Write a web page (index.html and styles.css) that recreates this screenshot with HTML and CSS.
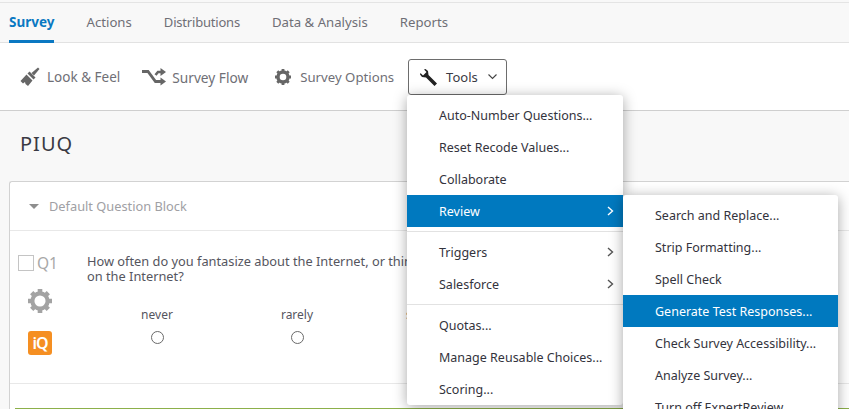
FILE: index.html
```html
<!DOCTYPE html>
<html>
<head>
    <title>PIUQ - Survey</title>
    <meta name="viewport" content="width=device-width, initial-scale=1.0">
    <link rel="stylesheet" href="styles.css">
</head>
<body>
    <div class="page">
        <nav class="tabs">
            <a class="tab tab-active">Survey</a>
            <a class="tab">Actions</a>
            <a class="tab tab-narrow">Distributions</a>
            <a class="tab">Data &amp; Analysis</a>
            <a class="tab">Reports</a>
        </nav>

        <div class="toolbar">
            <a class="tool tool-look">
                <svg class="tool-icon" width="20" height="20" viewBox="0 0 20 20"><path d="M11.500 6L18 0.500L19.500 2L14 8.500Z" fill="#666"/><path d="M9.500 4.500L15.500 10.500L13.500 12.500L7.500 6.500Z" fill="#666"/><path d="M6.500 7.500L12.500 13.500L8 19L5.500 17L5 15L3 16.500L0.500 14Z" fill="#666"/></svg>
                Look &amp; Feel
            </a>
            <a class="tool tool-flow">
                <svg class="tool-icon" width="24" height="18" viewBox="0 0 24 18"><path d="M0 3.500H6L13.500 13.500H19" fill="none" stroke="#666" stroke-width="2.800"/><path d="M13.500 7L16 4H19" fill="none" stroke="#666" stroke-width="2.600"/><path d="M18.500 0L24 4L18.500 8ZM18.500 9.500L24 13.500L18.500 17.500Z" fill="#666"/></svg>
                Survey Flow
            </a>
            <a class="tool tool-options">
                <svg class="tool-icon" width="18" height="18" viewBox="0 0 18 18"><circle cx="9" cy="9" r="5" fill="none" stroke="#666" stroke-width="3.400"/><path d="M9 1V17M1 9H17M3.300 3.300L14.700 14.700M14.700 3.300L3.300 14.700" stroke="#666" stroke-width="2.800"/><circle cx="9" cy="9" r="3.300" fill="#fff"/></svg>
                Survey Options
            </a>
            <button class="tools-btn">
                <svg width="17" height="17" viewBox="0 0 17 17"><path d="M5.500 0L8 2L8.500 6L17 14.500L14.500 17L6 8.500L2 8L0 5.500L0.500 4L3 6.500L6.500 3L4 0.500Z" fill="#222"/></svg>
                <span class="tools-label">Tools</span>
                <svg width="9" height="6" viewBox="0 0 9 6"><path d="M0.500 0.500L4.500 4.500L8.500 0.500" fill="none" stroke="#444" stroke-width="1.100"/></svg>
            </button>
        </div>

        <h1 class="survey-title">PIUQ</h1>

        <div class="block">
            <div class="block-header">
                <span class="caret"></span>
                <span class="block-name">Default Question Block</span>
            </div>
            <div class="question">
                <div class="q-side">
                    <div class="q-id"><span class="q-check"></span>Q1</div>
                    <svg class="q-gear" width="24" height="24" viewBox="0 0 26 26"><circle cx="13" cy="13" r="8" fill="none" stroke="#a3a3a3" stroke-width="5"/><path d="M13 0V26M0 13H26M4 4L22 22M22 4L4 22" stroke="#a3a3a3" stroke-width="5"/><circle cx="13" cy="13" r="6" fill="#fff"/></svg>
                    <div class="iq-badge">iQ</div>
                </div>
                <div class="q-body">
                    <p class="q-text">How often do you fantasize about the Internet, or think about what it would be like to be on the Internet?</p>
                    <div class="choices">
                        <div class="choice">never<span class="radio"></span></div>
                        <div class="choice">rarely<span class="radio"></span></div>
                        <div class="choice">sometimes<span class="radio"></span></div>
                    </div>
                </div>
            </div>
            <div class="block-footer"></div>
        </div>

        <div class="menu menu-tools">
            <a class="menu-item">Auto-Number Questions...</a>
            <a class="menu-item">Reset Recode Values...</a>
            <a class="menu-item">Collaborate</a>
            <a class="menu-item menu-item-on">Review<svg class="chev" width="7" height="10" viewBox="0 0 7 10"><path d="M1 1L5.500 5L1 9" fill="none" stroke="#fff" stroke-width="1.400"/></svg></a>
            <div class="menu-sep"></div>
            <a class="menu-item">Triggers<svg class="chev" width="7" height="10" viewBox="0 0 7 10"><path d="M1 1L5.500 5L1 9" fill="none" stroke="#555" stroke-width="1.400"/></svg></a>
            <a class="menu-item">Salesforce<svg class="chev" width="7" height="10" viewBox="0 0 7 10"><path d="M1 1L5.500 5L1 9" fill="none" stroke="#555" stroke-width="1.400"/></svg></a>
            <div class="menu-sep"></div>
            <a class="menu-item">Quotas...</a>
            <a class="menu-item">Manage Reusable Choices...</a>
            <a class="menu-item">Scoring...</a>
        </div>

        <div class="menu menu-review">
            <a class="menu-item">Search and Replace...</a>
            <a class="menu-item">Strip Formatting...</a>
            <a class="menu-item">Spell Check</a>
            <a class="menu-item menu-item-on">Generate Test Responses...</a>
            <a class="menu-item">Check Survey Accessibility...</a>
            <a class="menu-item">Analyze Survey...</a>
            <a class="menu-item">Turn off ExpertReview</a>
        </div>
    </div>
</body>
</html>
```

FILE: styles.css
```css
* {
    box-sizing: border-box;
}

html, body {
    margin: 0;
    height: 100%;
    overflow: hidden;
}

body {
    font-family: "Noto Sans", sans-serif;
    font-size: 13px;
    color: #3a3a44;
}

.page {
    position: relative;
    height: 409px;
    overflow: hidden;
    background-color: #f8f8f8;
    padding-top: 2px;
}

.tabs {
    display: flex;
    gap: 32px;
    height: 41px;
    padding-left: 9px;
    background-color: #f8f8f8;
    border-top: 1px solid #e4e4e4;
    border-bottom: 1px solid #e2e2e2;
}

.tab {
    height: 40px;
    font-size: 13.200px;
    line-height: 38px;
    color: #6f6f76;
}

.tab-narrow {
    font-size: 13px;
    letter-spacing: -0.200px;
}

.tab-active {
    color: #0a78c2;
    font-size: 13.500px;
    font-weight: 700;
    border-bottom: 3px solid #0a78c2;
}

.toolbar {
    display: flex;
    align-items: center;
    height: 68px;
    padding: 1px 0 0 20px;
    font-size: 13.500px;
    background-color: #fff;
    border-bottom: 1px solid #cfcfcf;
}

.tool {
    display: flex;
    align-items: center;
    color: #6f6f76;
}

.tool-icon {
    margin-right: 7px;
}

.tool-look {
    margin-right: 22px;
}

.tool-flow {
    margin-right: 26px;
    font-size: 13.700px;
}

.tool-flow .tool-icon {
    margin-right: 6px;
}

.tool-options {
    margin-right: 14px;
    font-size: 13.200px;
}

.tool-options .tool-icon {
    margin-right: 8px;
}

.tools-btn {
    display: flex;
    align-items: center;
    width: 99px;
    height: 36px;
    padding: 0 0 0 11px;
    font-family: inherit;
    font-size: 13px;
    color: #3a3a44;
    background-color: #fff;
    border: 1px solid #6d6d6d;
    border-radius: 3px;
}

.tools-label {
    margin: 0 10px 0 9px;
}

.survey-title {
    margin: 0;
    padding: 19px 0 0 20px;
    height: 70px;
    font-size: 20px;
    font-weight: 400;
    letter-spacing: 1px;
    line-height: 27px;
    color: #3a3a44;
}

.block {
    margin-left: 9px;
    background-color: #fff;
    border: 1px solid #d2d2d2;
    border-right: none;
    border-radius: 3px 0 0 0;
    height: 240px;
}

.block-header {
    display: flex;
    align-items: center;
    height: 49px;
    padding-left: 19px;
    border-bottom: 1px solid #e8e8e8;
}

.caret {
    width: 0;
    height: 0;
    margin-right: 10px;
    border-left: 5px solid transparent;
    border-right: 5px solid transparent;
    border-top: 5px solid #8e8e8e;
}

.block-name {
    font-size: 12.800px;
    color: #a0a0a4;
}

.question {
    display: flex;
    height: 153px;
    border-bottom: 1px solid #e8e8e8;
}

.q-side {
    display: flex;
    flex-direction: column;
    align-items: center;
    flex: none;
    width: 62px;
    padding: 23px 2px 0 0;
}

.q-id {
    display: flex;
    align-items: center;
    align-self: flex-start;
    margin-left: 8px;
    height: 18px;
    font-size: 15.500px;
    color: #a8a8a8;
}

.q-check {
    width: 16px;
    height: 16px;
    margin-right: 3px;
    border: 1px solid #c4c4c4;
}

.q-gear {
    margin-top: 17px;
}

.iq-badge {
    width: 24px;
    height: 24px;
    margin-top: 18px;
    font-size: 16px;
    font-weight: 600;
    line-height: 24px;
    text-align: center;
    letter-spacing: -1px;
    color: #fff;
    background-color: #f58f22;
    border-radius: 3px;
}

.q-body {
    flex: none;
    width: 345px;
    padding: 23px 0 0 15px;
    white-space: nowrap;
}

.q-text {
    margin: 0;
    font-size: 12.800px;
    line-height: 15px;
    white-space: normal;
    width: 545px;
    color: #55555e;
}

.choices {
    display: flex;
    margin-top: 23px;
}

.choice {
    display: flex;
    flex: none;
    flex-direction: column;
    align-items: center;
    width: 140px;
    font-size: 12px;
    line-height: 16px;
    color: #55555e;
}

.radio {
    width: 13px;
    height: 13px;
    margin-top: 8px;
    border: 1px solid #6a6a6a;
    border-radius: 50%;
}

.block-footer {
    height: 30px;
    margin: 24px 0 0 5px;
    border-top: 1px solid #8cb04a;
}

.menu {
    position: absolute;
    background-color: #fff;
    border-radius: 3px;
    box-shadow: 0 2px 14px rgba(0, 0, 0, 0.35);
}

.menu-tools {
    left: 407px;
    top: 95px;
    width: 216px;
    padding-top: 4px;
}

.menu-review {
    left: 623px;
    top: 195px;
    width: 215px;
    padding-top: 4px;
}

.menu-item {
    display: flex;
    align-items: center;
    justify-content: space-between;
    height: 32px;
    padding: 0 9px 0 32px;
    font-size: 12.500px;
    color: #33333c;
}

.menu-item-on {
    color: #fff;
    background-color: #0079bf;
}

.menu-sep {
    height: 9px;
    position: relative;
}

.menu-sep::after {
    content: "";
    position: absolute;
    left: 0;
    right: 0;
    top: 4px;
    height: 1px;
    background-color: #e2e2e2;
}
```
